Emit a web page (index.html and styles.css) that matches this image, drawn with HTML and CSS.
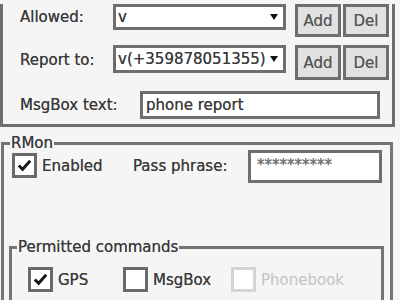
FILE: index.html
```html
<!DOCTYPE html>
<html lang="en">
<head>
  <meta charset="UTF-8" />
  <title>Settings</title>
  <link rel="stylesheet" href="styles.css">
</head>
<body>

  <div class="group top">
    <div class="row row1">
      <span class="lbl">Allowed:</span>
      <div class="combo"><span>v</span><i class="arrow"></i></div>
      <button class="btn">Add</button>
      <button class="btn">Del</button>
    </div>
    <div class="row row2">
      <span class="lbl">Report to:</span>
      <div class="combo"><span>v(+359878051355)</span><i class="arrow"></i></div>
      <button class="btn tall">Add</button>
      <button class="btn tall">Del</button>
    </div>
    <div class="row row3">
      <span class="lbl wide">MsgBox text:</span>
      <div class="field msg">phone report</div>
    </div>
  </div>

  <fieldset class="rmon">
    <legend>RMon</legend>
    <div class="row enabled">
      <label class="chk"><span class="box on"><svg viewBox="0 0 20 20"><path d="M4 10 L8 14 L16 5" /></svg></span>Enabled</label>
      <span class="lbl pass">Pass phrase:</span>
      <div class="field pw">**********</div>
    </div>

    <fieldset class="perm">
      <legend>Permitted commands</legend>
      <div class="row cmds">
        <label class="chk gps"><span class="box on"><svg viewBox="0 0 20 20"><path d="M4 10 L8 14 L16 5" /></svg></span>GPS</label>
        <label class="chk mb"><span class="box"></span>MsgBox</label>
        <label class="chk off"><span class="box"></span>Phonebook</label>
      </div>
    </fieldset>
  </fieldset>

</body>
</html>
```

FILE: styles.css
```css
body {
  margin: 0;
  width: 400px;
  height: 300px;
  overflow: hidden;
  background: #f5f5f5;
  color: #3a3a3a;
  font-family: "DejaVu Sans", sans-serif;
  font-size: 15px;
  text-shadow: 0 0 0.6px #555;
}
.group.top {
  box-sizing: border-box;
  width: 395px;
  height: 123px;
  border: solid #6e6e6e;
  border-width: 0 3px 3px 3px;
}
.row {
  display: flex;
  align-items: flex-start;
}
.lbl {
  width: 110px;
  padding-left: 17px;
  box-sizing: border-box;
  flex: none;
}
.lbl.wide {
  width: 137px;
}
.row1 {
  margin-top: 4px;
}
.row1 .lbl {
  line-height: 26px;
}
.row2 {
  margin-top: 8px;
}
.row2 .lbl {
  line-height: 30px;
}
.row3 {
  margin-top: 11px;
}
.row3 .lbl {
  line-height: 28px;
}
.combo {
  box-sizing: border-box;
  width: 173px;
  height: 26px;
  margin-right: 9px;
  border: 3px solid #6e6e6e;
  background: #fff;
  display: flex;
  align-items: center;
  padding-left: 2px;
  flex: none;
}
.row2 .combo {
  height: 28px;
}
.combo span {
  flex: 1;
  white-space: nowrap;
  overflow: hidden;
}
.arrow {
  width: 0;
  height: 0;
  margin: 0 5px 0 4px;
  border-left: 4px solid transparent;
  border-right: 4px solid transparent;
  border-top: 6px solid #111;
}
.btn {
  box-sizing: border-box;
  width: 46px;
  height: 33px;
  margin-right: 2px;
  border: 3px solid #6e6e6e;
  background: #e1e1e1;
  color: #555;
  font-family: "DejaVu Sans", sans-serif;
  font-size: 15px;
  padding: 0;
  text-shadow: 0 0 0.6px #777;
}
.btn.tall {
  height: 35px;
}
.field {
  box-sizing: border-box;
  border: 3px solid #6e6e6e;
  background: #fff;
  padding-left: 3px;
  white-space: nowrap;
}
.field.msg {
  width: 240px;
  height: 28px;
  line-height: 22px;
}
fieldset {
  margin: 0;
  padding: 0;
  border: 3px solid #747474;
}
legend {
  padding: 0 1px;
  line-height: 18px;
}
.rmon {
  margin: 7px 0 0 1px;
  width: 392px;
  box-sizing: border-box;
  height: 200px;
}
.rmon > legend {
  margin-left: 6px;
}
.enabled {
  margin-top: -2px;
}
.chk {
  display: flex;
  align-items: center;
  gap: 5px;
}
.enabled .chk {
  margin: 3px 0 0 8px;
  width: 121px;
}
.box {
  box-sizing: border-box;
  width: 25px;
  height: 25px;
  border: 3px solid #6a6a6a;
  background: #fff;
  display: flex;
}
.box svg {
  width: 19px;
  height: 19px;
}
.box path {
  fill: none;
  stroke: #151515;
  stroke-width: 3;
}
.lbl.pass {
  width: 115px;
  padding: 0;
  line-height: 33px;
}
.field.pw {
  width: 134px;
  height: 33px;
  line-height: 24px;
  padding-left: 6px;
  color: #777;
}
.perm {
  margin: 55px 0 0 5px;
  width: 375px;
  box-sizing: border-box;
  height: 80px;
}
.perm > legend {
  margin-left: 5px;
}
.cmds {
  margin-top: 11px;
}
.chk.gps {
  margin-left: 16px;
  width: 95px;
}
.chk.mb {
  width: 108px;
}
.chk.off {
  color: #c4c4c4;
  text-shadow: none;
}
.chk.off .box {
  border-color: #d4d4d4;
}
```
